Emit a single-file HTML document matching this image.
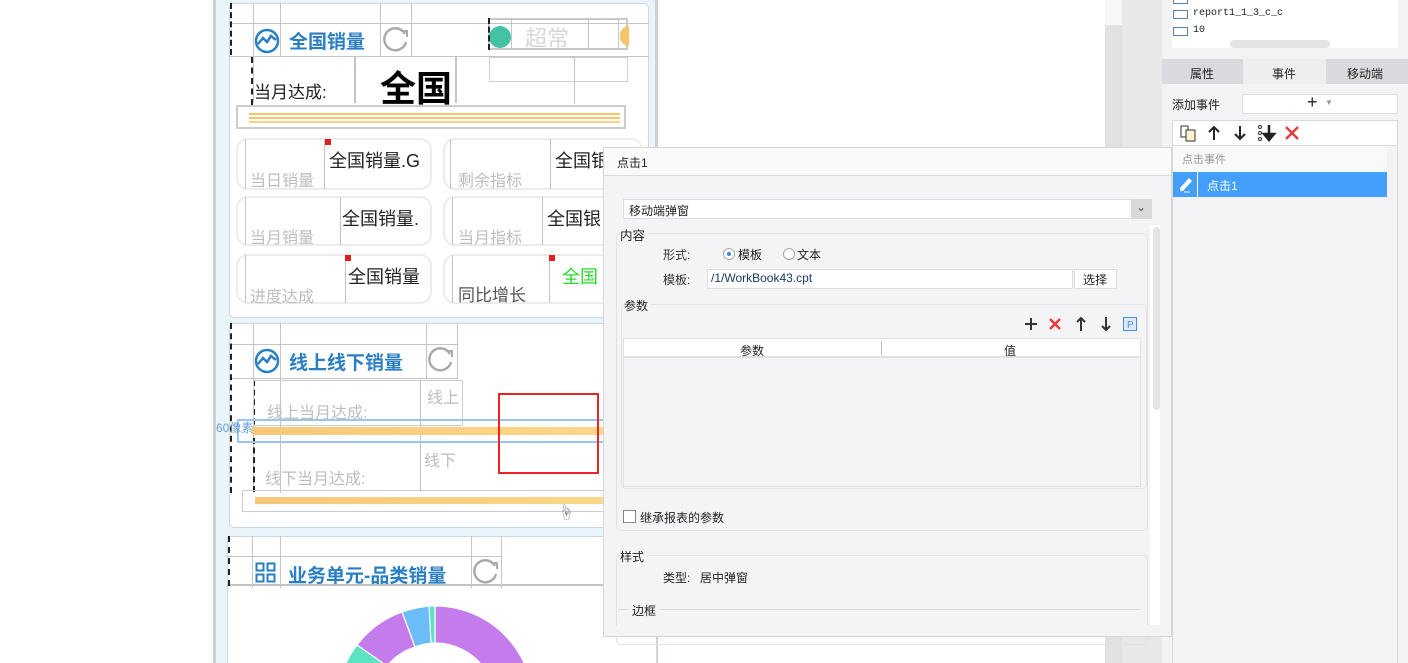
<!DOCTYPE html>
<html style="overflow:hidden;width:1408px;height:663px"><head><meta charset="utf-8">
<style>
*{margin:0;padding:0;box-sizing:border-box}
body{width:1408px;height:663px;overflow:hidden;background:#fff;position:relative;font-family:"Liberation Sans","Noto Sans CJK SC",sans-serif;font-size:12px;color:#222}
.a{position:absolute}
.t{position:absolute;white-space:nowrap}
.gl{position:absolute;background:#c4c4c4}
.card{position:absolute;background:#fff;border:1px solid #cfd6dc;border-radius:5px}
.blue{color:#2a7fc4;font-weight:bold;font-size:19px}
.gray{color:#bdbdbd;font-size:16px}
.mini{position:absolute;border:2px solid #ececec;border-radius:12px;background:#fff}
</style></head><body>
<div class="a" style="left:213px;top:0;width:3px;height:663px;background:#d0d0d0"></div>
<div class="a" style="left:216px;top:0;width:440px;height:663px;background:#eaf4fb"></div>
<div class="a" style="left:655px;top:0;width:3px;height:663px;background:#cfcfcf"></div>
<div class="a" style="left:1105px;top:0;width:17px;height:663px;background:#e1e1e1"></div>
<div class="a" style="left:1105px;top:0;width:17px;height:25px;background:#f7f7f5"></div>
<div class="a" style="left:1122px;top:0;width:40px;height:663px;background:#e8e8e8"></div>

<div class="card" style="left:229px;top:3px;width:420px;height:315px"></div>
<div class="gl" style="left:229px;top:23px;width:420px;height:1px"></div>
<div class="gl" style="left:229px;top:56px;width:420px;height:1px"></div>
<div class="gl" style="left:253px;top:3px;width:1px;height:100px"></div>
<div class="gl" style="left:280px;top:3px;width:1px;height:53px"></div>
<div class="gl" style="left:380px;top:3px;width:1px;height:53px"></div>
<div class="gl" style="left:411px;top:3px;width:1px;height:53px"></div>
<div class="gl" style="left:354px;top:57px;width:2px;height:46px"></div>
<div class="gl" style="left:455px;top:57px;width:2px;height:46px"></div>
<div class="a" style="left:230px;top:3px;width:0;height:52px;border-left:2px dashed #222"></div>
<div class="a" style="left:251px;top:57px;width:0;height:48px;border-left:2px dashed #222"></div>
<svg class="a" style="left:254px;top:28px" width="26" height="26" viewBox="0 0 26 26"><circle cx="13" cy="13" r="11" fill="none" stroke="#2a7fc4" stroke-width="2.5"/><path d="M4 16 L9 10 L13 14 L17 8 L22 12" fill="none" stroke="#2a7fc4" stroke-width="2.5"/></svg>
<div class="t blue" style="left:289px;top:27px">全国销量</div>
<svg class="a" style="left:381px;top:25px" width="30" height="30"><path d="M24 9 A11 11 0 1 0 25 17" fill="none" stroke="#aaa" stroke-width="2.5"/><path d="M20 6 L26 6 L26 12" fill="none" stroke="#aaa" stroke-width="2"/></svg>
<div class="a" style="left:488px;top:18px;width:140px;height:32px;border:2px solid #c8c8c8"></div>
<div class="a" style="left:489px;top:26px;width:22px;height:22px;border-radius:50%;background:#43c2a4"></div>
<div class="a" style="left:488px;top:18px;width:0;height:32px;border-left:2px dashed #222"></div>
<div class="gl" style="left:511px;top:18px;width:1px;height:32px"></div>
<div class="gl" style="left:588px;top:18px;width:1px;height:32px"></div>
<div class="gl" style="left:618px;top:18px;width:1px;height:32px"></div>
<div class="t" style="left:525px;top:21px;font-size:22px;color:#d8d8d8">超常</div>
<div class="a" style="left:620px;top:26px;width:9px;height:20px;border-radius:10px 0 0 10px;background:#f8c46a"></div>
<div class="a" style="left:489px;top:57px;width:139px;height:25px;border:1px solid #d0d0d0"></div>
<div class="gl" style="left:574px;top:57px;width:1px;height:47px"></div>
<div class="t" style="left:254px;top:78px;font-size:17px;color:#222">当月达成:</div>
<div class="t" style="left:380px;top:60px;font-size:36px;font-weight:bold;color:#000">全国</div>
<div class="a" style="left:236px;top:105px;width:390px;height:24px;border:2px solid #ccc;background:#fff"></div>
<div class="a" style="left:249px;top:113px;width:371px;height:2px;background:#f8c46a"></div>
<div class="a" style="left:249px;top:117px;width:371px;height:2px;background:#f8c46a"></div>
<div class="a" style="left:249px;top:121px;width:371px;height:2px;background:#fbd27f"></div>
<div class="mini" style="left:236px;top:138px;width:196px;height:52px"></div>
<div class="mini" style="left:443px;top:138px;width:200px;height:52px"></div>
<div class="mini" style="left:236px;top:196px;width:196px;height:50px"></div>
<div class="mini" style="left:443px;top:196px;width:200px;height:50px"></div>
<div class="mini" style="left:236px;top:254px;width:196px;height:50px"></div>
<div class="mini" style="left:443px;top:254px;width:200px;height:50px"></div>
<div class="gl" style="left:245px;top:139px;width:1px;height:50px"></div>
<div class="gl" style="left:324px;top:139px;width:1px;height:50px"></div>
<div class="gl" style="left:340px;top:197px;width:1px;height:48px"></div>
<div class="gl" style="left:345px;top:255px;width:1px;height:48px"></div>
<div class="gl" style="left:245px;top:197px;width:1px;height:48px"></div>
<div class="gl" style="left:245px;top:255px;width:1px;height:48px"></div>
<div class="gl" style="left:450px;top:139px;width:1px;height:50px"></div>
<div class="gl" style="left:550px;top:139px;width:1px;height:50px"></div>
<div class="gl" style="left:452px;top:197px;width:1px;height:48px"></div>
<div class="gl" style="left:542px;top:197px;width:1px;height:48px"></div>
<div class="gl" style="left:452px;top:255px;width:1px;height:48px"></div>
<div class="gl" style="left:549px;top:255px;width:1px;height:48px"></div>
<div class="t gray" style="left:250px;top:167px">当日销量</div>
<div class="t" style="left:329px;top:147px;font-size:18px">全国销量.G</div>
<div class="t gray" style="left:458px;top:167px">剩余指标</div>
<div class="t" style="left:555px;top:147px;font-size:18px">全国银</div>
<div class="t gray" style="left:250px;top:224px">当月销量</div>
<div class="t" style="left:342px;top:205px;font-size:18px">全国销量.</div>
<div class="t gray" style="left:458px;top:224px">当月指标</div>
<div class="t" style="left:547px;top:205px;font-size:18px">全国银</div>
<div class="t gray" style="left:250px;top:283px">进度达成</div>
<div class="t" style="left:348px;top:263px;font-size:18px">全国销量</div>
<div class="t" style="left:458px;top:281px;font-size:17px;color:#555">同比增长</div>
<div class="t" style="left:562px;top:263px;font-size:18px;color:#2ad92a">全国</div>
<div class="a" style="left:325px;top:139px;width:6px;height:6px;background:#e02020"></div>
<div class="a" style="left:345px;top:255px;width:6px;height:6px;background:#e02020"></div>
<div class="a" style="left:549px;top:255px;width:6px;height:6px;background:#e02020"></div>

<div class="card" style="left:229px;top:323px;width:420px;height:205px"></div>
<div class="gl" style="left:229px;top:344px;width:228px;height:1px"></div>
<div class="gl" style="left:229px;top:378px;width:228px;height:1px"></div>
<div class="gl" style="left:253px;top:323px;width:1px;height:170px"></div>
<div class="gl" style="left:280px;top:323px;width:1px;height:170px"></div>
<div class="gl" style="left:426px;top:323px;width:1px;height:56px"></div>
<div class="gl" style="left:457px;top:323px;width:1px;height:56px"></div>
<div class="a" style="left:230px;top:323px;width:0;height:170px;border-left:2px dashed #222"></div>
<div class="a" style="left:253px;top:380px;width:0;height:112px;border-left:2px dashed #222"></div>
<svg class="a" style="left:254px;top:348px" width="26" height="26" viewBox="0 0 26 26"><circle cx="13" cy="13" r="11" fill="none" stroke="#2a7fc4" stroke-width="2.5"/><path d="M4 16 L9 10 L13 14 L17 8 L22 12" fill="none" stroke="#2a7fc4" stroke-width="2.5"/></svg>
<div class="t blue" style="left:289px;top:348px">线上线下销量</div>
<svg class="a" style="left:426px;top:345px" width="30" height="30"><path d="M24 9 A11 11 0 1 0 25 17" fill="none" stroke="#aaa" stroke-width="2.5"/><path d="M20 6 L26 6 L26 12" fill="none" stroke="#aaa" stroke-width="2"/></svg>
<div class="a" style="left:253px;top:380px;width:210px;height:46px;border:1px solid #ccc"></div>
<div class="gl" style="left:420px;top:380px;width:1px;height:110px"></div>
<div class="t gray" style="left:267px;top:399px">线上当月达成:</div>
<div class="t gray" style="left:427px;top:384px">线上</div>
<div class="a" style="left:237px;top:419px;width:370px;height:24px;border:2px solid #9cc4ef"></div>
<div class="a" style="left:252px;top:427px;width:355px;height:8px;background:linear-gradient(90deg,#f6c878,#fcd888)"></div>
<div class="t" style="left:216px;top:419px;font-size:12px;color:#6aa0d8">60像素</div>
<div class="t gray" style="left:265px;top:465px">线下当月达成:</div>
<div class="t gray" style="left:424px;top:447px">线下</div>
<div class="a" style="left:242px;top:490px;width:370px;height:22px;border:1px solid #ccc"></div>
<div class="a" style="left:255px;top:497px;width:352px;height:7px;background:linear-gradient(90deg,#f6c878,#fcd888)"></div>
<div class="t" style="left:558px;top:499px;font-size:16px;color:#888">☝</div>
<div class="a" style="left:498px;top:393px;width:101px;height:81px;border:2px solid #e22"></div>

<div class="card" style="left:227px;top:536px;width:430px;height:127px;border-radius:0;border-bottom:none"></div>
<div class="gl" style="left:227px;top:556px;width:275px;height:1px"></div>
<div class="gl" style="left:227px;top:584px;width:430px;height:2px"></div>
<div class="gl" style="left:252px;top:536px;width:1px;height:52px"></div>
<div class="gl" style="left:280px;top:536px;width:1px;height:52px"></div>
<div class="gl" style="left:471px;top:536px;width:1px;height:52px"></div>
<div class="gl" style="left:501px;top:536px;width:1px;height:52px"></div>
<div class="a" style="left:228px;top:536px;width:0;height:50px;border-left:2px dashed #222"></div>
<svg class="a" style="left:255px;top:562px" width="22" height="22"><rect x="1.5" y="1.5" width="7" height="7" fill="none" stroke="#2a7fc4" stroke-width="2"/><rect x="12.5" y="1.5" width="7" height="7" fill="none" stroke="#2a7fc4" stroke-width="2"/><rect x="1.5" y="12.5" width="7" height="7" fill="none" stroke="#2a7fc4" stroke-width="2"/><rect x="12.5" y="12.5" width="7" height="7" fill="none" stroke="#2a7fc4" stroke-width="2"/></svg>
<div class="t blue" style="left:288px;top:561px">业务单元-品类销量</div>
<svg class="a" style="left:471px;top:557px" width="30" height="30"><path d="M24 9 A11 11 0 1 0 25 17" fill="none" stroke="#aaa" stroke-width="2.5"/><path d="M20 6 L26 6 L26 12" fill="none" stroke="#aaa" stroke-width="2"/></svg>
<svg class="a" style="left:330px;top:600px" width="210" height="63" viewBox="0 0 210 63">
<g transform="translate(105,104)" stroke="#fff" stroke-width="1.2">
<path d="M0 -98 A98 98 0 0 1 90 39 L56 24 A61 61 0 0 0 0 -61Z" fill="#c47ced"/>
<path d="M-33 -92 A98 98 0 0 1 0 -98 L0 -61 A61 61 0 0 0 -20 -57Z" fill="#6cbdf7"/>
<path d="M-6 -98 A98 98 0 0 1 0 -98 L0 -61 A61 61 0 0 0 -4 -61Z" fill="#5ce3c4"/>
<path d="M-78 -59 A98 98 0 0 1 -33 -92 L-20 -57 A61 61 0 0 0 -48 -38Z" fill="#c47ced"/>
<path d="M-95 -25 A98 98 0 0 1 -78 -59 L-48 -38 A61 61 0 0 0 -59 -16Z" fill="#5ce3c4"/>
</g></svg>

<div class="a" style="left:1162px;top:0;width:246px;height:663px;background:#f3f3f5"></div>
<div class="a" style="left:1172px;top:0;width:226px;height:48px;background:#fff"></div>
<div class="a" style="left:1173px;top:-4px;width:15px;height:8px;border:1px solid #5a7fb0"></div>
<div class="a" style="left:1173px;top:10px;width:15px;height:9px;border:1px solid #5a7fb0"></div>
<div class="t" style="left:1193px;top:8px;font-family:'Liberation Mono',monospace;font-size:10px">report1_1_3_c_c</div>
<div class="a" style="left:1173px;top:27px;width:15px;height:9px;border:1px solid #5a7fb0"></div>
<div class="t" style="left:1193px;top:25px;font-family:'Liberation Mono',monospace;font-size:10px">10</div>
<div class="a" style="left:1230px;top:40px;width:100px;height:8px;border-radius:4px;background:#e4e4e4"></div>
<div class="a" style="left:1162px;top:59px;width:81px;height:25px;background:#d9dadd"></div>
<div class="a" style="left:1243px;top:59px;width:83px;height:25px;background:#eeeef0"></div>
<div class="a" style="left:1326px;top:59px;width:82px;height:25px;background:#d9dadd"></div>
<div class="t" style="left:1190px;top:65px">属性</div>
<div class="t" style="left:1272px;top:65px">事件</div>
<div class="t" style="left:1347px;top:65px">移动端</div>
<div class="t" style="left:1172px;top:96px">添加事件</div>
<div class="a" style="left:1242px;top:94px;width:156px;height:20px;background:#fff;border:1px solid #ddd"></div>
<div class="t" style="left:1307px;top:92px;font-size:18px">+</div><div class="t" style="left:1325px;top:98px;font-size:8px;color:#999">▼</div>
<div class="a" style="left:1172px;top:120px;width:226px;height:543px;border:1px solid #d9d9d9;border-bottom:none"></div>
<div class="a" style="left:1173px;top:121px;width:224px;height:25px;background:#fff;border-bottom:1px solid #ddd"></div>
<svg class="a" style="left:1179px;top:124px" width="18" height="18"><path d="M2 2h7v11H2z" fill="#fff" stroke="#333"/><path d="M7 6h9v11H7z" fill="#fdf1cf" stroke="#333"/></svg>
<svg class="a" style="left:1207px;top:125px" width="14" height="16"><path d="M7 2v13M2 7l5-5 5 5" fill="none" stroke="#222" stroke-width="2"/></svg>
<svg class="a" style="left:1233px;top:125px" width="14" height="16"><path d="M7 1v13M2 9l5 5 5-5" fill="none" stroke="#222" stroke-width="2"/></svg>
<svg class="a" style="left:1257px;top:124px" width="20" height="18"><circle cx="3" cy="3" r="1.5" fill="none" stroke="#333"/><circle cx="3" cy="9" r="1.5" fill="none" stroke="#333"/><circle cx="3" cy="15" r="1.5" fill="none" stroke="#333"/><path d="M12 1v12M7 10l5 6 5-6z" fill="#222" stroke="#222" stroke-width="2.5"/></svg>
<svg class="a" style="left:1284px;top:125px" width="16" height="16"><path d="M2 2l12 12M14 2L2 14" stroke="#e83d3d" stroke-width="2.5"/></svg>
<div class="a" style="left:1173px;top:146px;width:214px;height:26px;background:#f9f9f9"></div>
<div class="t" style="left:1182px;top:151px;font-size:11px;color:#999">点击事件</div>
<div class="a" style="left:1173px;top:172px;width:214px;height:25px;background:#439ffa"></div>
<div class="a" style="left:1197px;top:172px;width:1px;height:25px;background:#fff"></div>
<svg class="a" style="left:1177px;top:175px" width="18" height="18"><path d="M3 13L12 3l3 3-9 10H3z" fill="#fff"/><path d="M7 17h6" stroke="#fff"/></svg>
<div class="t" style="left:1207px;top:177px;color:#fff">点击1</div>

<div class="a" style="left:603px;top:147px;width:569px;height:490px;background:#f4f4f6;border:1px solid #d6d6d8"></div>
<div class="a" style="left:604px;top:148px;width:567px;height:28px;background:#fafafa;border-bottom:1px solid #dcdcde"></div>
<div class="t" style="left:617px;top:154px">点击1</div>
<div class="a" style="left:623px;top:199px;width:529px;height:20px;background:#fff;border:1px solid #ddd"></div>
<div class="a" style="left:1131px;top:199px;width:21px;height:20px;background:#d9d9dc"></div>
<div class="t" style="left:1136px;top:200px;font-size:12px;color:#555">⌄</div>
<div class="t" style="left:629px;top:202px">移动端弹窗</div>
<div class="a" style="left:616px;top:233px;width:532px;height:298px;border:1px solid #e2e2e4;border-radius:5px"></div>
<div class="t" style="left:620px;top:225px;background:#f4f4f6;padding-right:3px;font-size:12.5px">内容</div>
<div class="t" style="left:663px;top:246px;color:#333">形式:</div>
<div class="a" style="left:723px;top:248px;width:12px;height:12px;border-radius:50%;border:1px solid #aaa;background:#fff"></div>
<div class="a" style="left:727px;top:252px;width:4px;height:4px;border-radius:50%;background:#3a86e0"></div>
<div class="t" style="left:738px;top:246px">模板</div>
<div class="a" style="left:783px;top:248px;width:12px;height:12px;border-radius:50%;border:1px solid #aaa;background:#fff"></div>
<div class="t" style="left:797px;top:246px">文本</div>
<div class="t" style="left:663px;top:271px;color:#333">模板:</div>
<div class="a" style="left:707px;top:269px;width:366px;height:20px;background:#fff;border:1px solid #ddd"></div>
<div class="t" style="left:711px;top:271px;color:#1a3a6a">/1/WorkBook43.cpt</div>
<div class="a" style="left:1074px;top:269px;width:43px;height:20px;background:#fff;border:1px solid #ddd"></div>
<div class="t" style="left:1083px;top:271px">选择</div>
<div class="a" style="left:621px;top:304px;width:526px;height:185px;border:1px solid #e2e2e4;border-radius:5px"></div>
<div class="t" style="left:624px;top:297px;background:#f4f4f6;padding-right:3px">参数</div>
<svg class="a" style="left:1023px;top:316px" width="120" height="16"><path d="M8 2v12M2 8h12" stroke="#333" stroke-width="2"/><path d="M27 3l10 10M37 3L27 13" stroke="#e83d3d" stroke-width="2.5"/><path d="M58 2v13M54 6l4-4 4 4" fill="none" stroke="#333" stroke-width="2"/><path d="M83 1v13M79 10l4 4 4-4" fill="none" stroke="#333" stroke-width="2"/><rect x="100.5" y="1.5" width="13" height="13" fill="#dbe9fb" stroke="#4a90e2"/><text x="104" y="12" font-size="10" fill="#4a90e2" font-family="Liberation Sans">P</text></svg>
<div class="a" style="left:623px;top:338px;width:518px;height:149px;border:1px solid #e0e0e0"></div>
<div class="a" style="left:624px;top:339px;width:516px;height:19px;background:#fff;border-bottom:2px solid #e0e0e0"></div>
<div class="a" style="left:881px;top:341px;width:1px;height:14px;background:#bbb"></div>
<div class="t" style="left:740px;top:342px">参数</div>
<div class="t" style="left:1004px;top:342px">值</div>
<div class="a" style="left:623px;top:510px;width:13px;height:13px;border:1px solid #888;background:#fff"></div>
<div class="t" style="left:640px;top:509px">继承报表的参数</div>
<div class="a" style="left:616px;top:555px;width:532px;height:90px;border:1px solid #e2e2e4;border-radius:5px"></div>
<div class="t" style="left:620px;top:548px;background:#f4f4f6;padding-right:3px">样式</div>
<div class="t" style="left:663px;top:569px">类型:</div>
<div class="t" style="left:700px;top:569px">居中弹窗</div>
<div class="a" style="left:618px;top:609px;width:522px;height:1px;background:#dcdcdc"></div>
<div class="t" style="left:628px;top:602px;background:#f4f4f6;padding:0 4px">边框</div>
<div class="a" style="left:1150px;top:225px;width:10px;height:400px;background:#fff"></div>
<div class="a" style="left:1153px;top:227px;width:7px;height:183px;border-radius:4px;background:#e4e4e4"></div>
<div class="a" style="left:603px;top:626px;width:569px;height:11px;background:#f4f4f6;border:1px solid #d6d6d8;border-top:none"></div>
</body></html>
